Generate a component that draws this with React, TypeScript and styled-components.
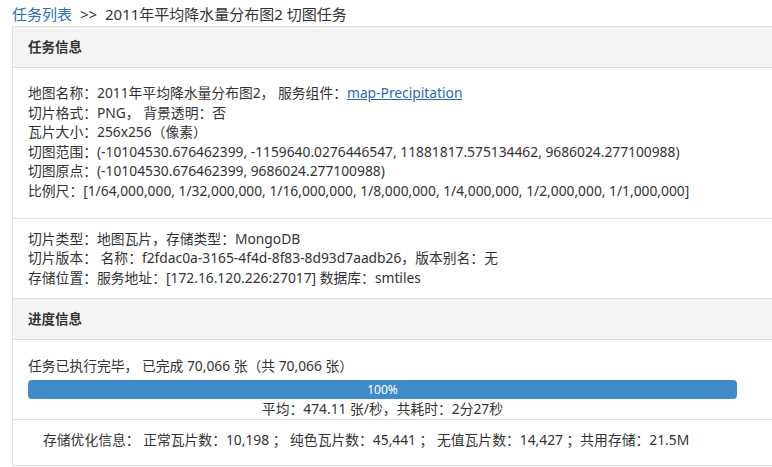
import styled, { createGlobalStyle } from 'styled-components'

const GlobalStyle = createGlobalStyle`
  html, body {
    margin: 0;
    padding: 0;
    background: #fff;
    overflow: hidden;
  }
  body {
    font-family: "Noto Sans", "Noto Sans CJK SC", sans-serif;
    color: #333;
  }
`

const Page = styled.div`
  padding: 4px 0 0 12px;
  width: 820px;
`
const Breadcrumb = styled.div`
  font-size: 15px;
  line-height: 20px;
  margin-bottom: 2px;
  white-space: nowrap;
  color: #333;
`
const CrumbLink = styled.a`
  color: #2d6fb7;
  text-decoration: none;
  margin-right: 8px;
`
const Panel = styled.div`
  border: 1px solid #ddd;
  border-right: none;
  font-size: 13.8px;
  line-height: 19.6px;
`
const Heading = styled.div<{ $first?: boolean }>`
  display: flex;
  align-items: center;
  height: 39px;
  padding: 1px 15px 0;
  background: #f4f4f4;
  border-top: ${(p) => (p.$first ? 'none' : '1px solid #ddd')};
  border-bottom: 1px solid #ddd;
  font-weight: bold;
  font-size: 13.5px;
`
const Section = styled.div<{ $pt: number; $pb: number; $pl?: number; $divider?: boolean }>`
  padding: ${(p) => `${p.$pt}px 15px ${p.$pb}px ${p.$pl ?? 15}px`};
  border-bottom: ${(p) => (p.$divider ? '1px solid #e3e3e3' : 'none')};
  white-space: nowrap;
`
const Line = styled.div`
  height: 19.6px;
`
const Link = styled.a`
  color: #2a6ab0;
  text-decoration: underline;
`
const ProgressWrap = styled.div`
  width: 709px;
`
const Bar = styled.div`
  margin-top: 4px;
  height: 19.5px;
  border-radius: 4px;
  background: #428bca;
  color: #fff;
  font-size: 12px;
  line-height: 19.5px;
  text-align: center;
`
const Stats = styled.div`
  text-align: center;
  line-height: 19.6px;
`

const mapLines = [
  '切片格式：PNG， 背景透明：否',
  '瓦片大小：256x256（像素）',
  '切图范围：(-10104530.676462399, -1159640.0276446547, 11881817.575134462, 9686024.277100988)',
  '切图原点：(-10104530.676462399, 9686024.277100988)',
  '比例尺：[1/64,000,000, 1/32,000,000, 1/16,000,000, 1/8,000,000, 1/4,000,000, 1/2,000,000, 1/1,000,000]',
]

const storageLines = [
  '切片类型：地图瓦片，存储类型：MongoDB',
  '切片版本： 名称：f2fdac0a-3165-4f4d-8f83-8d93d7aadb26，版本别名：无',
  '存储位置：服务地址：[172.16.120.226:27017] 数据库：smtiles',
]

export default function App() {
  const percent = 100
  return (
    <Page>
      <GlobalStyle />
      <Breadcrumb>
        <CrumbLink href="#">任务列表</CrumbLink>&gt;&gt;&nbsp; 2011年平均降水量分布图2 切图任务
      </Breadcrumb>
      <Panel>
        <Heading $first>任务信息</Heading>
        <Section $pt={15} $pb={17} $divider>
          <Line>
            地图名称：2011年平均降水量分布图2， 服务组件：<Link href="#">map-Precipitation</Link>
          </Line>
          {mapLines.map((l) => (
            <Line key={l}>{l}</Line>
          ))}
        </Section>
        <Section $pt={10} $pb={11}>
          {storageLines.map((l) => (
            <Line key={l}>{l}</Line>
          ))}
        </Section>
        <Heading>进度信息</Heading>
        <Section $pt={16} $pb={0} $divider>
          <Line>任务已执行完毕， 已完成 70,066 张（共 70,066 张）</Line>
          <ProgressWrap>
            <Bar style={{ width: `${percent}%` }}>{percent}%</Bar>
            <Stats>平均：474.11 张/秒，共耗时：2分27秒</Stats>
          </ProgressWrap>
        </Section>
        <Section $pt={10} $pb={15} $pl={30}>
          <Line>存储优化信息： 正常瓦片数：10,198 ； 纯色瓦片数：45,441 ； 无值瓦片数：14,427 ；共用存储：21.5M</Line>
        </Section>
      </Panel>
    </Page>
  )
}
